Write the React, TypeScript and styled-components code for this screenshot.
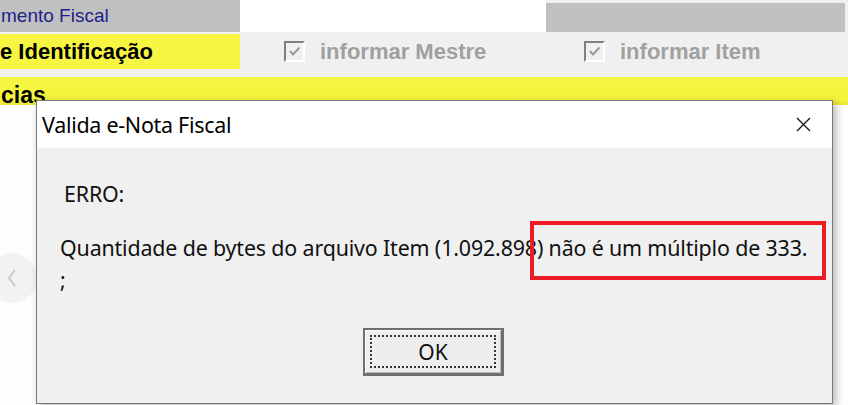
import React from "react";
import styled, { createGlobalStyle } from "styled-components";

const Global = createGlobalStyle`
  html, body { margin: 0; padding: 0; }
  body { background: #ffffff; font-family: "Liberation Sans", Arial, sans-serif; overflow: hidden; }
  #root { width: 848px; height: 405px; }
`;

const Page = styled.div`
  position: relative;
  width: 848px;
  height: 405px;
  display: flex;
  flex-direction: column;
  background: #fdfdfd;
  overflow: hidden;
`;

const Form = styled.div`
  display: flex;
  flex-direction: column;
  background: #f0f0f0;
`;

const FieldRow = styled.div`
  display: flex;
  height: 32px;
`;

const Cell = styled.div<{ $w: number; $bg: string; $top?: number }>`
  width: ${(p) => p.$w}px;
  margin-top: ${(p) => p.$top ?? 0}px;
  background: ${(p) => p.$bg};
  overflow: hidden;
  display: flex;
  align-items: center;
  flex-shrink: 0;
`;

const NavyText = styled.span`
  color: #20208a;
  font-family: "Liberation Sans", Arial, sans-serif;
  font-size: 19px;
  padding-left: 1px;
  white-space: nowrap;
`;

const OptionsRow = styled.div`
  display: flex;
  height: 35px;
  margin-top: 2px;
`;

const YellowLabel = styled.div`
  width: 240px;
  background: #f6f642;
  display: flex;
  align-items: center;
  overflow: hidden;
  flex-shrink: 0;
`;

const BoldText = styled.span`
  color: #000;
  font-weight: bold;
  font-size: 22px;
  white-space: nowrap;
`;

const Options = styled.div`
  display: flex;
  padding-left: 44px;
`;

const Option = styled.label`
  width: 300px;
  display: flex;
  align-items: center;
  gap: 15px;
  color: #a0a0a0;
  font-weight: bold;
  font-size: 22px;
  white-space: nowrap;
`;

const Box = styled.span`
  width: 17px;
  height: 17px;
  border-top: 2px solid #808080;
  border-left: 2px solid #808080;
  border-right: 2px solid #ffffff;
  border-bottom: 2px solid #ffffff;
  background: #f0f0f0;
  display: flex;
  align-items: center;
  justify-content: center;
`;

const SectionBar = styled.div`
  margin-top: 8px;
  height: 28px;
  background: linear-gradient(#f6f642 0%, #f4f43c 80%, #e6e63a 100%);
  display: flex;
  align-items: flex-end;
`;

const SectionTitle = styled.span`
  font-weight: bold;
  font-size: 23px;
  line-height: 23px;
  color: #000;
  padding-left: 1px;
  margin-bottom: -2px;
`;

const Content = styled.div`
  flex: 1;
  background: #fdfdfd;
`;

const NavCircle = styled.div`
  position: absolute;
  left: -13px;
  top: 253px;
  width: 50px;
  height: 50px;
  border-radius: 50%;
  background: #f2f2f4;
  display: flex;
  align-items: center;
  justify-content: flex-end;
  padding-right: 20px;
  box-sizing: border-box;
`;

const Dialog = styled.div`
  position: absolute;
  left: 36px;
  top: 100px;
  width: 797px;
  height: 304px;
  box-sizing: border-box;
  border: 1px solid #7a7a7a;
  background: #f0f0f0;
  box-shadow: 3px 3px 8px rgba(0, 0, 0, 0.28);
  display: flex;
  flex-direction: column;
  font-family: "Noto Sans", "Open Sans", sans-serif;
`;

const TitleBar = styled.div`
  height: 47px;
  background: #ffffff;
  display: flex;
  align-items: center;
  justify-content: space-between;
  padding: 0 21px 0 5px;
`;

const Title = styled.span`
  font-size: 21.5px;
  color: #000;
  letter-spacing: -0.3px;
`;

const Body = styled.div`
  flex: 1;
  display: flex;
  flex-direction: column;
  padding: 30px 0 0 23px;
`;

const MessageLine = styled.div<{ $indent?: number }>`
  font-size: 21.4px;
  line-height: 32px;
  color: #111;
  padding-left: ${(p) => p.$indent ?? 0}px;
  white-space: pre;
  letter-spacing: -0.15px;
`;

const Message = styled.div`
  margin-top: 22px;
`;

const ButtonRow = styled.div`
  display: flex;
  justify-content: flex-start;
  padding-left: 303px;
  margin-top: 32px;
`;

const OkButton = styled.button`
  width: 141px;
  height: 48px;
  box-sizing: border-box;
  border: 2px solid #6f6f6f;
  border-right-width: 3px;
  border-bottom-width: 3px;
  background: #eeeeee;
  box-shadow: inset 1px 1px #ffffff, inset -1px -1px #b8b8b8;
  padding: 5px;
  font-family: "Noto Sans", "Open Sans", sans-serif;
  font-size: 21px;
  color: #111;
  display: flex;
`;

const FocusRing = styled.span`
  flex: 1;
  border: 2px dotted #333;
  display: flex;
  align-items: center;
  justify-content: center;
`;

const Highlight = styled.div`
  position: absolute;
  left: 530px;
  top: 221px;
  width: 296px;
  height: 59px;
  box-sizing: border-box;
  border: 4px solid #ed1c24;
  pointer-events: none;
`;

export default function App() {
  return (
    <>
      <Global />
      <Page>
        <Form>
          <FieldRow>
            <Cell $w={240} $bg="#c0c0c0">
              <NavyText>mento Fiscal</NavyText>
            </Cell>
            <Cell $w={306} $bg="#ffffff" />
            <Cell $w={299} $bg="#c0c0c0" $top={3} />
          </FieldRow>
          <OptionsRow>
            <YellowLabel>
              <BoldText>e Identificação</BoldText>
            </YellowLabel>
            <Options>
              <Option>
                <Box>
                  <svg width="13" height="11" viewBox="0 0 13 11">
                    <path d="M2 5 L5 8.5 L11.5 1.5" stroke="#9a9a9a" strokeWidth="2" fill="none" />
                  </svg>
                </Box>
                informar Mestre
              </Option>
              <Option>
                <Box>
                  <svg width="13" height="11" viewBox="0 0 13 11">
                    <path d="M2 5 L5 8.5 L11.5 1.5" stroke="#9a9a9a" strokeWidth="2" fill="none" />
                  </svg>
                </Box>
                informar Item
              </Option>
            </Options>
          </OptionsRow>
          <SectionBar>
            <SectionTitle>cias</SectionTitle>
          </SectionBar>
        </Form>
        <Content />
        <NavCircle>
          <svg width="10" height="20" viewBox="0 0 10 20">
            <path d="M8 2 L2 10 L8 18" stroke="#c9c9cd" strokeWidth="2" fill="none" />
          </svg>
        </NavCircle>
        <Dialog>
          <TitleBar>
            <Title>Valida e-Nota Fiscal</Title>
            <svg width="15" height="15" viewBox="0 0 15 15">
              <path d="M1 1 L14 14 M14 1 L1 14" stroke="#111" strokeWidth="1.3" />
            </svg>
          </TitleBar>
          <Body>
            <MessageLine $indent={4}>ERRO:</MessageLine>
            <Message>
              <MessageLine>Quantidade de bytes do arquivo Item (1.092.898) não é um múltiplo de 333.</MessageLine>
              <MessageLine>;</MessageLine>
            </Message>
            <ButtonRow>
              <OkButton>
                <FocusRing>OK</FocusRing>
              </OkButton>
            </ButtonRow>
          </Body>
        </Dialog>
        <Highlight />
      </Page>
    </>
  );
}
